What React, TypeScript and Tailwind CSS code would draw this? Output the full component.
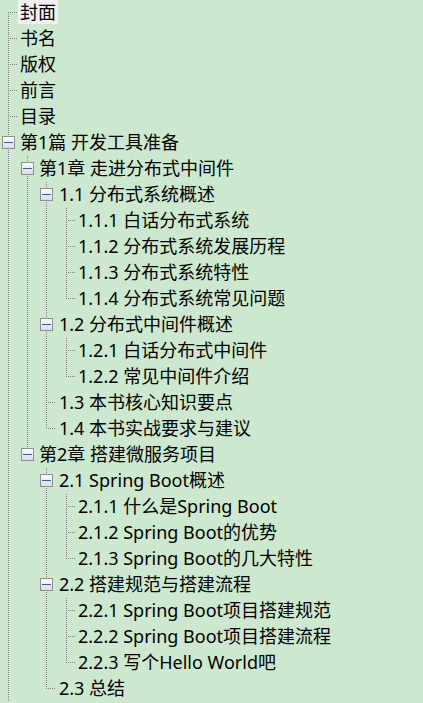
import React from "react";

type TreeNode = { label: string; children?: TreeNode[]; selected?: boolean };

const tree: TreeNode[] = [
  { label: "封面", selected: true },
  { label: "书名" },
  { label: "版权" },
  { label: "前言" },
  { label: "目录" },
  {
    label: "第1篇 开发工具准备",
    children: [
      {
        label: "第1章 走进分布式中间件",
        children: [
          {
            label: "1.1 分布式系统概述",
            children: [
              { label: "1.1.1 白话分布式系统" },
              { label: "1.1.2 分布式系统发展历程" },
              { label: "1.1.3 分布式系统特性" },
              { label: "1.1.4 分布式系统常见问题" },
            ],
          },
          {
            label: "1.2 分布式中间件概述",
            children: [
              { label: "1.2.1 白话分布式中间件" },
              { label: "1.2.2 常见中间件介绍" },
            ],
          },
          { label: "1.3 本书核心知识要点" },
          { label: "1.4 本书实战要求与建议" },
        ],
      },
      {
        label: "第2章 搭建微服务项目",
        children: [
          {
            label: "2.1 Spring Boot概述",
            children: [
              { label: "2.1.1 什么是Spring Boot" },
              { label: "2.1.2 Spring Boot的优势" },
              { label: "2.1.3 Spring Boot的几大特性" },
            ],
          },
          {
            label: "2.2 搭建规范与搭建流程",
            children: [
              { label: "2.2.1 Spring Boot项目搭建规范" },
              { label: "2.2.2 Spring Boot项目搭建流程" },
              { label: "2.2.3 写个Hello World吧" },
            ],
          },
          { label: "2.3 总结" },
        ],
      },
    ],
  },
];

type Row = {
  label: string;
  level: number;
  guides: boolean[];
  hasNext: boolean;
  first: boolean;
  hasChildren: boolean;
  selected?: boolean;
};

function flatten(nodes: TreeNode[], level: number, guides: boolean[], out: Row[]) {
  nodes.forEach((n, i) => {
    // the root list continues below the visible area
    const hasNext = i < nodes.length - 1 || level === 0;
    out.push({
      label: n.label,
      level,
      guides,
      hasNext,
      first: level === 0 && i === 0,
      hasChildren: !!n.children,
      selected: n.selected,
    });
    if (n.children) flatten(n.children, level + 1, [...guides, hasNext], out);
  });
  return out;
}

const rows = flatten(tree, 0, [], []);

const CELL_W = [19, 19, 20, 19, 20];
const LINE = "#808080";
const DASH = "1 1";

function Guide({ w, on }: { w: number; on: boolean }) {
  return (
    <svg width={w} height={26} className="block shrink-0">
      {on && (
        <line x1={8.5} y1={0} x2={8.5} y2={26} stroke={LINE} strokeWidth={1} strokeDasharray={DASH} />
      )}
    </svg>
  );
}

function Connector({ r, id }: { r: Row; id: number }) {
  const w = CELL_W[r.level];
  const gid = `bx${id}`;
  return (
    <svg width={w} height={26} className="block shrink-0">
      {!r.first && (
        <line x1={8.5} y1={0} x2={8.5} y2={12} stroke={LINE} strokeWidth={1} strokeDasharray={DASH} />
      )}
      {r.hasNext && (
        <line x1={8.5} y1={12} x2={8.5} y2={26} stroke={LINE} strokeWidth={1} strokeDasharray={DASH} />
      )}
      {!r.hasChildren && (
        <line x1={8} y1={12.5} x2={18} y2={12.5} stroke={LINE} strokeWidth={1} strokeDasharray={DASH} />
      )}
      {r.hasChildren && (
        <g>
          <defs>
            <linearGradient id={gid} x1="0" y1="0" x2="0" y2="1">
              <stop offset="0" stopColor="#ffffff" />
              <stop offset="1" stopColor="#dcdcdc" />
            </linearGradient>
          </defs>
          <rect x={2.5} y={6.5} width={12} height={12} fill={`url(#${gid})`} stroke="#8e8f8f" strokeWidth={1} />
          <line x1={4} y1={12.5} x2={13} y2={12.5} stroke="#3c5aa5" strokeWidth={1} />
        </g>
      )}
    </svg>
  );
}

function TreeRow({ r, id }: { r: Row; id: number }) {
  return (
    <div className="flex h-[26px] items-start">
      {r.guides.map((g, k) => (
        <Guide key={k} w={CELL_W[k]} on={g} />
      ))}
      <Connector r={r} id={id} />
      <span
        className={`-ml-px h-[24px] whitespace-nowrap px-[2px] text-[18px] leading-[24px] text-black ${
          r.selected ? "bg-[#f0f0f0]" : ""
        }`}
      >
        {r.label}
      </span>
    </div>
  );
}

export default function App() {
  return (
    <div
      className="flex h-screen w-full flex-col overflow-hidden bg-[#cce8cf]"
      style={{ fontFamily: '"Noto Sans", "Noto Sans CJK SC", sans-serif' }}
    >
      {rows.map((r, i) => (
        <TreeRow key={i} r={r} id={i} />
      ))}
    </div>
  );
}
